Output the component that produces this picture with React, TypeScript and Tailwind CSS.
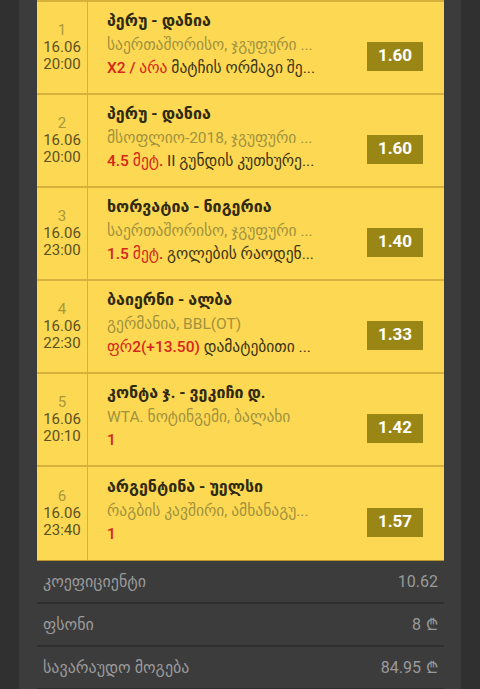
const rows = [
  { n: "1", d: "16.06", t: "20:00", title: "პერუ - დანია", sub: "საერთაშორისო, ჯგუფური ...", red: "X2 / არა", rest: " მატჩის ორმაგი შე...", odd: "1.60" },
  { n: "2", d: "16.06", t: "20:00", title: "პერუ - დანია", sub: "მსოფლიო-2018, ჯგუფური ...", red: "4.5 მეტ.", rest: " II გუნდის კუთხურე...", odd: "1.60" },
  { n: "3", d: "16.06", t: "23:00", title: "ხორვატია - ნიგერია", sub: "საერთაშორისო, ჯგუფური ...", red: "1.5 მეტ.", rest: " გოლების რაოდენ...", odd: "1.40" },
  { n: "4", d: "16.06", t: "22:30", title: "ბაიერნი - ალბა", sub: "გერმანია, BBL(OT)", red: "ფრ2(+13.50)", rest: " დამატებითი ...", odd: "1.33" },
  { n: "5", d: "16.06", t: "20:10", title: "კონტა ჯ. - ვეკიჩი დ.", sub: "WTA. ნოტინგემი, ბალახი", red: "1", rest: "", odd: "1.42" },
  { n: "6", d: "16.06", t: "23:40", title: "არგენტინა - უელსი", sub: "რაგბის კავშირი, ამხანაგუ...", red: "1", rest: "", odd: "1.57" },
];

const totals = [
  { label: "კოეფიციენტი", value: "10.62", lari: false },
  { label: "ფსონი", value: "8", lari: true },
  { label: "სავარაუდო მოგება", value: "84.95", lari: true },
];

export default function App() {
  return (
    <div className="h-[689px] w-[480px] overflow-hidden bg-[#303030] px-[19px] font-['Roboto','DejaVu_Sans',sans-serif]">
      <div className="h-full bg-[#3c3c3c] pl-[18px] pr-[17px]">
        <div className="border-t-2 border-[#d6b23c] bg-[#fdd853] shadow-[0_1px_0_#b8962a]">
          {rows.map((r, i) => (
            <div key={i} className={`flex h-[93px] ${i < rows.length - 1 ? "border-b-2 border-[#d6b23c]" : ""}`}>
              <div className="flex w-[51px] shrink-0 flex-col items-center justify-center border-r border-[#d6b23c] text-[15px] leading-[17px] text-[#5b5222]">
                <span className="text-[#a8983a]">{r.n}</span>
                <span>{r.d}</span>
                <span>{r.t}</span>
              </div>
              <div className="flex min-w-0 flex-1 items-center pl-[19px] pr-[21px]">
                <div className="min-w-0 flex-1 pr-[8px] pb-[8px]">
                  <div className="overflow-hidden whitespace-nowrap text-[16px] font-bold leading-[24px] text-[#2f2a10]">{r.title}</div>
                  <div className="overflow-hidden whitespace-nowrap text-[15.5px] leading-[24px] text-[#a1923e]">{r.sub}</div>
                  <div className="overflow-hidden whitespace-nowrap text-[15.5px] leading-[22px] text-[#3a3414]">
                    <span className="font-medium text-[#d4261b]">{r.red}</span>
                    {r.rest}
                  </div>
                </div>
                <div className="mt-[17px] flex h-[29px] w-[56px] shrink-0 items-center justify-center bg-[#9a8614] text-[17px] font-bold text-white">
                  {r.odd}
                </div>
              </div>
            </div>
          ))}
        </div>
        <div className="mt-px">
          {totals.map((t, i) => (
            <div key={i} className="flex h-[43px] items-center justify-between border-b-2 border-[#2f2f2f] px-[6px] text-[16px] text-[#9a9a9a]">
              <span>{t.label}</span>
              <span>
                {t.value}
                {t.lari && <span className="ml-[5px]">₾</span>}
              </span>
            </div>
          ))}
        </div>
      </div>
    </div>
  );
}
